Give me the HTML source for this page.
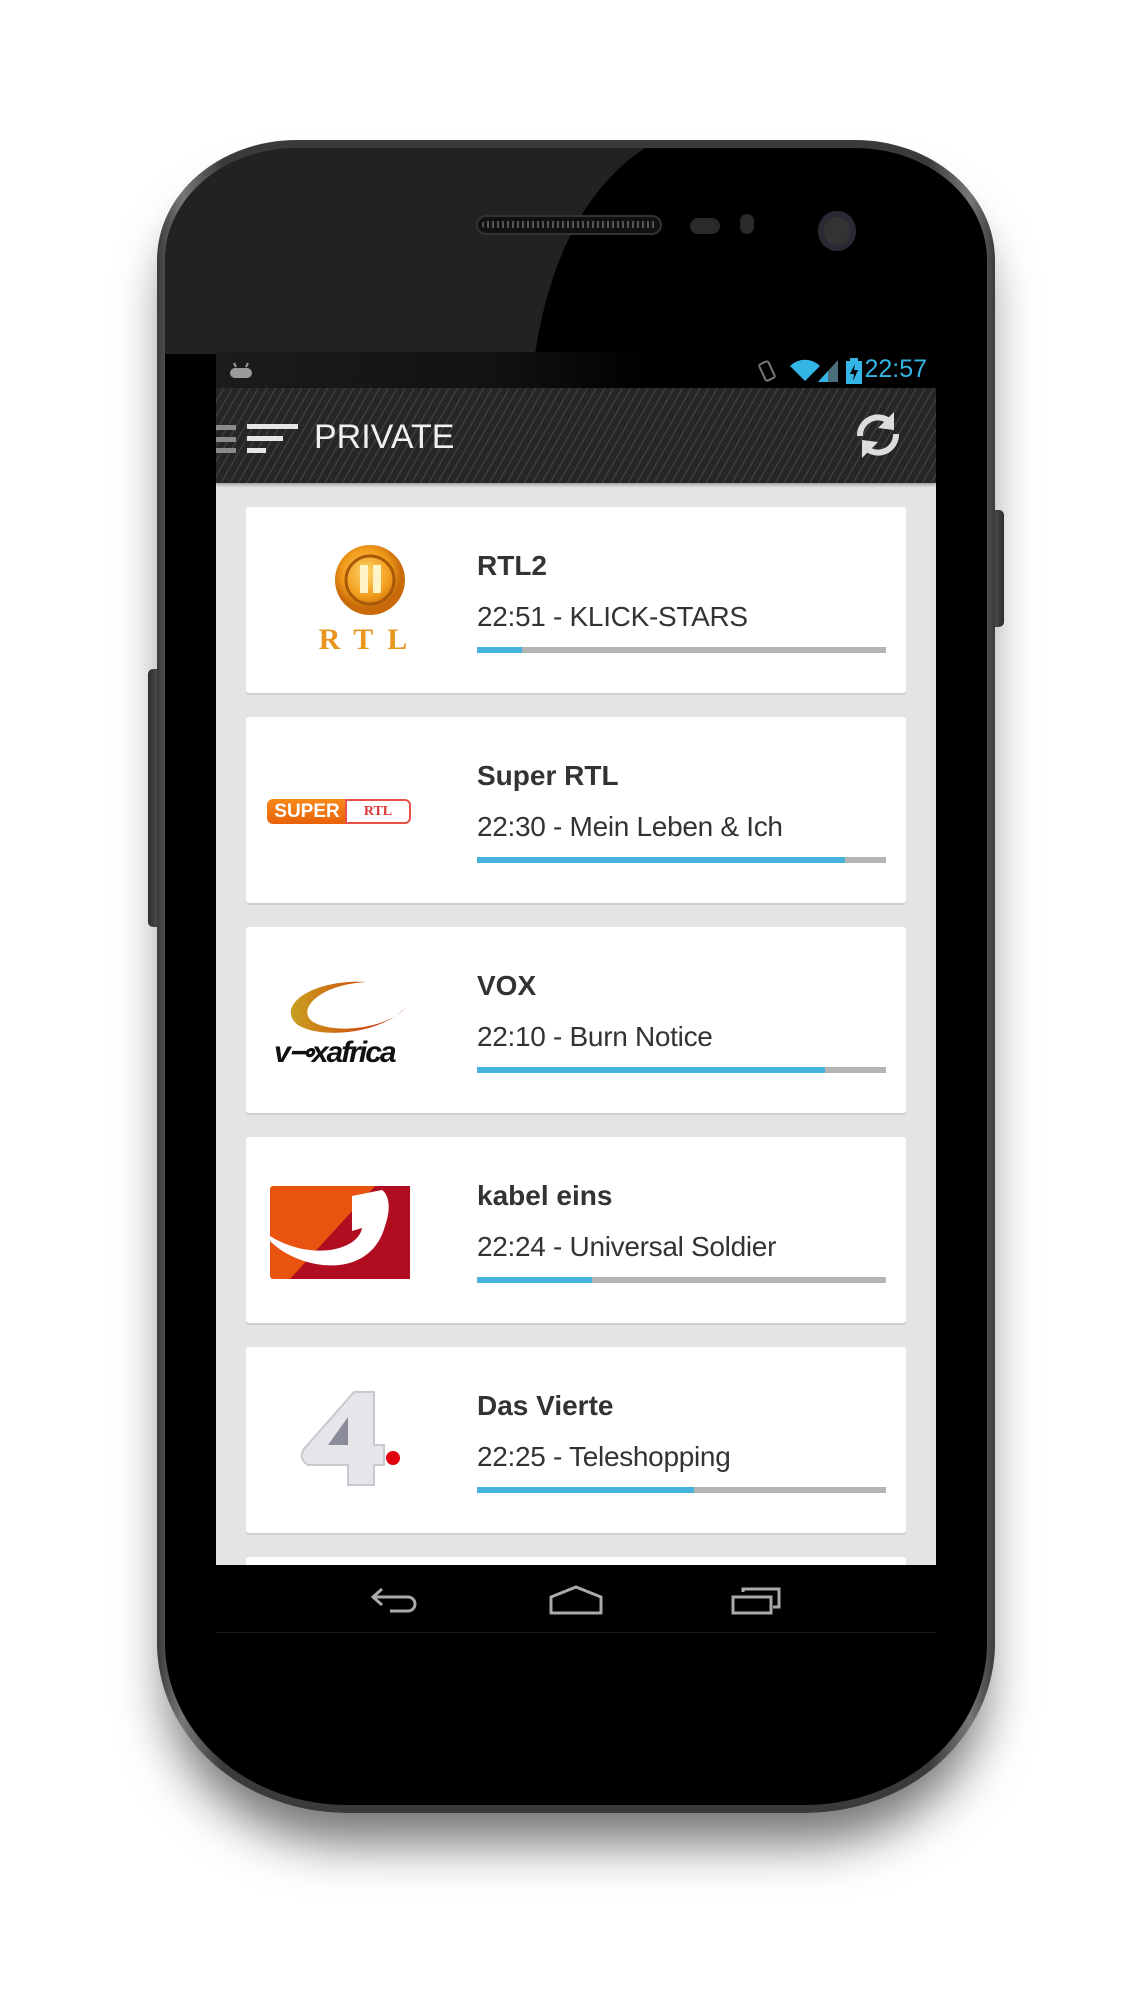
<!DOCTYPE html>
<html><head><meta charset="utf-8"><style>
*{margin:0;padding:0;box-sizing:border-box}
html,body{width:1148px;height:1994px;background:#fff;overflow:hidden;position:relative;font-family:"Liberation Sans",Arial,sans-serif}
.abs{position:absolute}
.phone{left:157px;top:140px;width:838px;height:1673px;border-radius:140px 140px 190px 190px/120px 120px 170px 170px;background:linear-gradient(90deg,#3a3a3a,#777 3%,#3a3a3a 8%,#3a3a3a 92%,#777 97%,#3a3a3a);box-shadow:0 40px 50px -10px rgba(0,0,0,.55)}
.inner{left:8px;top:8px;right:8px;bottom:8px;border-radius:132px 132px 182px 182px/112px 112px 162px 162px;background:#000;overflow:hidden}
.screen{left:216px;top:352px;width:720px;height:1281px;background:#e4e4e4;overflow:hidden}
.status{left:0;top:0;width:720px;height:36px;background:linear-gradient(90deg,#1c1c1c,#111 40%,#000 60%)}
.abar{left:0;top:36px;width:720px;height:95px;background:repeating-linear-gradient(120deg,#262626 0 6px,#3d3d3d 6px 7.5px);box-shadow:0 2px 3px rgba(0,0,0,.3)}
.card{left:30px;width:660px;height:186px;background:#fff;border-radius:3px;box-shadow:0 2px 0 #cfcfcf}
.t{left:231px;top:43px;font-size:28px;font-weight:bold;color:#333}
.s{left:231px;top:94px;font-size:28px;color:#333;letter-spacing:-.3px}
.bar{left:231px;top:140px;width:409px;height:6px;background:#b4b4b4}
.bar i{position:absolute;left:0;top:0;height:6px;background:#46b3dd}
.nav{left:0;top:1213px;width:720px;height:68px;background:#000;border-bottom:1px solid #1a1a1a}
</style></head><body>
<div class="abs" style="left:148px;top:669px;width:12px;height:258px;border-radius:5px 0 0 5px;background:linear-gradient(90deg,#333,#666)"></div>
<div class="abs" style="left:992px;top:510px;width:12px;height:117px;border-radius:0 5px 5px 0;background:linear-gradient(90deg,#666,#333)"></div>
<div class="abs phone"><div class="abs inner">
<svg class="abs" style="left:0;top:0" width="822" height="206"><path d="M0 0 H480 C420 40 385 110 370 206 H0 Z" fill="#222"/></svg>
</div></div>
<div class="abs" style="left:476px;top:215px;width:186px;height:20px;border-radius:10px;background:#111;border:2px solid #333"></div>
<div class="abs" style="left:482px;top:221px;width:174px;height:7px;background:repeating-linear-gradient(90deg,#555 0 2px,#111 2px 5px);border-radius:3px"></div>
<div class="abs" style="left:690px;top:218px;width:30px;height:16px;border-radius:8px;background:#2a2a2a"></div>
<div class="abs" style="left:740px;top:214px;width:14px;height:20px;border-radius:7px;background:#2a2a2a"></div>
<div class="abs" style="left:818px;top:211px;width:38px;height:40px;border-radius:50%;background:#333;box-shadow:inset 0 0 0 6px #2a2a35"></div>
<div class="abs screen">
 <div class="abs status">
  <svg class="abs" style="left:12px;top:8px" width="26" height="20"><rect x="2" y="8" width="22" height="10" rx="5" fill="#9a9a9a"/><line x1="6" y1="3" x2="8" y2="7" stroke="#9a9a9a" stroke-width="2"/><line x1="20" y1="3" x2="18" y2="7" stroke="#9a9a9a" stroke-width="2"/></svg>
  <svg class="abs" style="left:540px;top:7px" width="24" height="24"><rect x="6" y="3" width="10" height="18" rx="2" transform="rotate(-25 11 12)" fill="none" stroke="#777" stroke-width="2"/></svg>
  <svg class="abs" style="left:574px;top:7px" width="30" height="24"><path d="M15 22 L0 7 A21 21 0 0 1 30 7 Z" fill="#33b5e5"/></svg>
  <svg class="abs" style="left:602px;top:8px" width="20" height="22"><path d="M0 22 L20 0 V22 Z" fill="#4a6d7a"/><path d="M0 22 L10 11 V22Z" fill="#33b5e5"/></svg>
  <svg class="abs" style="left:630px;top:6px" width="16" height="26"><rect x="4" y="0" width="8" height="4" fill="#33b5e5"/><rect x="0" y="3" width="16" height="23" fill="#33b5e5"/><path d="M9 6 L4 16 H8 L7 23 L12 12 H8Z" fill="#000"/></svg>
  <div class="abs" style="right:9px;top:3px;font-size:25px;color:#33b5e5">22:57</div>
 </div>
 <div class="abs abar">
  <div class="abs" style="left:0;top:37px;width:20px;height:5px;background:#8a8a8a"></div>
  <div class="abs" style="left:0;top:49px;width:20px;height:5px;background:#8a8a8a"></div>
  <div class="abs" style="left:0;top:60px;width:20px;height:5px;background:#8a8a8a"></div>
  <div class="abs" style="left:31px;top:36px;width:51px;height:5px;background:#e6e6e6"></div>
  <div class="abs" style="left:31px;top:48px;width:36px;height:5px;background:#e6e6e6"></div>
  <div class="abs" style="left:31px;top:60px;width:19px;height:5px;background:#e6e6e6"></div>
  <div class="abs" style="left:98px;top:30px;font-size:34px;color:#f0f0f0">PRIVATE</div>
  <svg class="abs" style="left:638px;top:22px" width="48" height="50" viewBox="0 0 48 50"><path d="M6 26 A18 18 0 0 1 36 12" fill="none" stroke="#ddd" stroke-width="6"/><path d="M40 2 L40 20 L24 18 Z" fill="#ddd"/><path d="M42 24 A18 18 0 0 1 12 38" fill="none" stroke="#ddd" stroke-width="6"/><path d="M8 48 L8 30 L24 32 Z" fill="#ddd"/></svg>
 </div>
 <div class="abs card" style="top:155px">
  <svg class="abs" style="left:40px;top:20px" width="170" height="140"><defs><radialGradient id="g1" cx="45%" cy="40%"><stop offset="0" stop-color="#ffd56a"/><stop offset=".7" stop-color="#f09a1a"/><stop offset="1" stop-color="#c86a0a"/></radialGradient></defs><circle cx="84" cy="53" r="35" fill="url(#g1)"/><circle cx="84" cy="53" r="24" fill="none" stroke="#a85a08" stroke-width="3"/><rect x="74" y="38" width="8" height="28" fill="#fff3c8"/><rect x="87" y="38" width="8" height="28" fill="#fff3c8"/><text x="84" y="122" text-anchor="middle" font-family="Liberation Serif" font-weight="bold" font-size="30" fill="#e8961e" letter-spacing="14">RTL</text></svg>
  <div class="abs t">RTL2</div><div class="abs s">22:51 - KLICK-STARS</div><div class="abs bar"><i style="width:11%"></i></div>
 </div>
 <div class="abs card" style="top:365px">
  <div class="abs" style="left:21px;top:82px;width:80px;height:25px;background:linear-gradient(#f98a1a,#e8610a);border-radius:6px 0 0 6px;color:#fff;font-weight:bold;font-size:19px;line-height:25px;text-align:center">SUPER</div>
  <div class="abs" style="left:99px;top:82px;width:66px;height:25px;background:#fff;border:2px solid #e8504a;border-radius:0 6px 6px 0;color:#d33;font-weight:bold;font-size:14px;line-height:21px;text-align:center;font-family:'Liberation Serif'">RTL</div>
  <div class="abs t">Super RTL</div><div class="abs s">22:30 - Mein Leben &amp; Ich</div><div class="abs bar"><i style="width:90%"></i></div>
 </div>
 <div class="abs card" style="top:575px">
  <svg class="abs" style="left:24px;top:50px" width="150" height="90"><defs><linearGradient id="g2" x1="0" x2="1"><stop offset="0" stop-color="#c8a020"/><stop offset=".5" stop-color="#d06010"/><stop offset="1" stop-color="#c01a10"/></linearGradient></defs><path d="M96 5 C40 2 5 30 28 48 C50 62 110 58 136 30 C120 50 70 58 45 46 C25 36 45 8 96 5Z" fill="url(#g2)"/><text x="4" y="85" font-family="Liberation Sans" font-weight="bold" font-style="italic" font-size="30" fill="#111" letter-spacing="-2">v⊸xafrica</text></svg>
  <div class="abs t">VOX</div><div class="abs s">22:10 - Burn Notice</div><div class="abs bar"><i style="width:85%"></i></div>
 </div>
 <div class="abs card" style="top:785px">
  <svg class="abs" style="left:24px;top:49px" width="140" height="93"><rect width="140" height="93" rx="3" fill="#e8540f"/><path d="M105 0 L140 0 L140 93 L20 93 Z" fill="#b00e20"/><path d="M0 55 C30 85 100 95 115 40 C122 20 118 8 112 4 L82 10 L82 45 L92 42 C88 65 40 75 0 50Z" fill="#fff"/></svg>
  <div class="abs t">kabel eins</div><div class="abs s">22:24 - Universal Soldier</div><div class="abs bar"><i style="width:28%"></i></div>
 </div>
 <div class="abs card" style="top:995px">
  <svg class="abs" style="left:40px;top:40px" width="120" height="110"><path d="M68 5 L88 5 L88 58 L98 58 L98 78 L88 78 L88 98 L62 98 L62 78 L22 78 Q12 72 18 62 Z" fill="#e6e6ea" stroke="#c8c8d0" stroke-width="2"/><path d="M62 30 L62 58 L42 58 Z" fill="#8a8c9a"/><circle cx="107" cy="71" r="7" fill="#e00010"/></svg>
  <div class="abs t">Das Vierte</div><div class="abs s">22:25 - Teleshopping</div><div class="abs bar"><i style="width:53%"></i></div>
 </div>
 <div class="abs card" style="top:1205px"></div>
 <div class="abs nav">
  <svg class="abs" style="left:154px;top:22px" width="50" height="28"><path d="M12 2 L3 10 L12 18 M3 10 H38 A7 7 0 0 1 38 24 H20" fill="none" stroke="#aaa" stroke-width="3"/></svg>
  <svg class="abs" style="left:333px;top:20px" width="54" height="30"><path d="M2 28 V12 L27 2 L52 12 V28 Z" fill="none" stroke="#aaa" stroke-width="3"/></svg>
  <svg class="abs" style="left:515px;top:22px" width="52" height="28"><rect x="2" y="10" width="38" height="16" fill="none" stroke="#aaa" stroke-width="3"/><path d="M12 5 V2 H48 V20 H42" fill="none" stroke="#aaa" stroke-width="3"/></svg>
 </div>
</div>
</body></html>
